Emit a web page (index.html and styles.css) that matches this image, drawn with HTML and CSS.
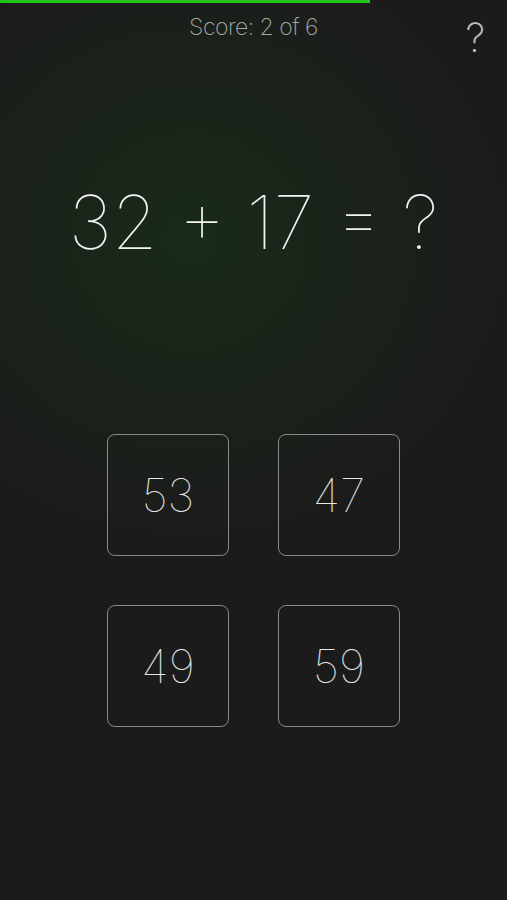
FILE: index.html
```html
<!DOCTYPE html>
<html lang="en">
<head>
    <meta charset="UTF-8">
    <meta name="viewport" content="width=device-width, initial-scale=1.0">
    <title>Quick Math</title>
    <link rel="stylesheet" href="styles.css">
</head>
<body>
    <div class="screen">
        <div class="progress">
            <div class="progress-fill" style="width: 73%;"></div>
        </div>

        <div class="header">
            <div class="score">Score: 2 of 6</div>
            <div class="help">?</div>
        </div>

        <div class="question">32 + 17 = ?</div>

        <div class="answers">
            <button class="answer">53</button>
            <button class="answer">47</button>
            <button class="answer">49</button>
            <button class="answer">59</button>
        </div>
    </div>
</body>
</html>
```

FILE: styles.css
```css
body {
    margin: 0;
    background: #1b1b1b;
    font-family: Inter, Lato, "Liberation Sans", sans-serif;
    font-weight: 100;
    color: #eee;
}

.screen {
    height: 900px;
    background:
        radial-gradient(ellipse 320px 300px at 190px 240px, rgba(24, 48, 24, 0.75), rgba(27, 27, 27, 0) 100%),
        #1b1b1b;
    display: flex;
    flex-direction: column;
    align-items: center;
}

.progress {
    width: 100%;
    height: 3px;
}

.progress-fill {
    height: 100%;
    background: #22c41a;
}

.header {
    position: relative;
    width: 100%;
    height: 50px;
    display: flex;
    justify-content: center;
    align-items: center;
}

.score {
    font-size: 23px;
    color: #a8a8a8;
    font-weight: 200;
    letter-spacing: -0.5px;
    margin-top: -2px;
}

.help {
    position: absolute;
    right: 22px;
    top: 10px;
    font-size: 40px;
    font-weight: 200;
    color: #c0c0c0;
}

.question {
    margin-top: 124px;
    font-size: 74px;
    color: #f2f2f2;
}

.answers {
    margin-top: 167px;
    display: grid;
    grid-template-columns: 122px 122px;
    gap: 49px;
}

.answer {
    width: 122px;
    height: 122px;
    border: 1px solid #8a8a8a;
    border-radius: 8px;
    background: transparent;
    color: #e6e6e6;
    font-family: inherit;
    font-weight: 100;
    font-size: 46px;
    padding: 0;
}
```
